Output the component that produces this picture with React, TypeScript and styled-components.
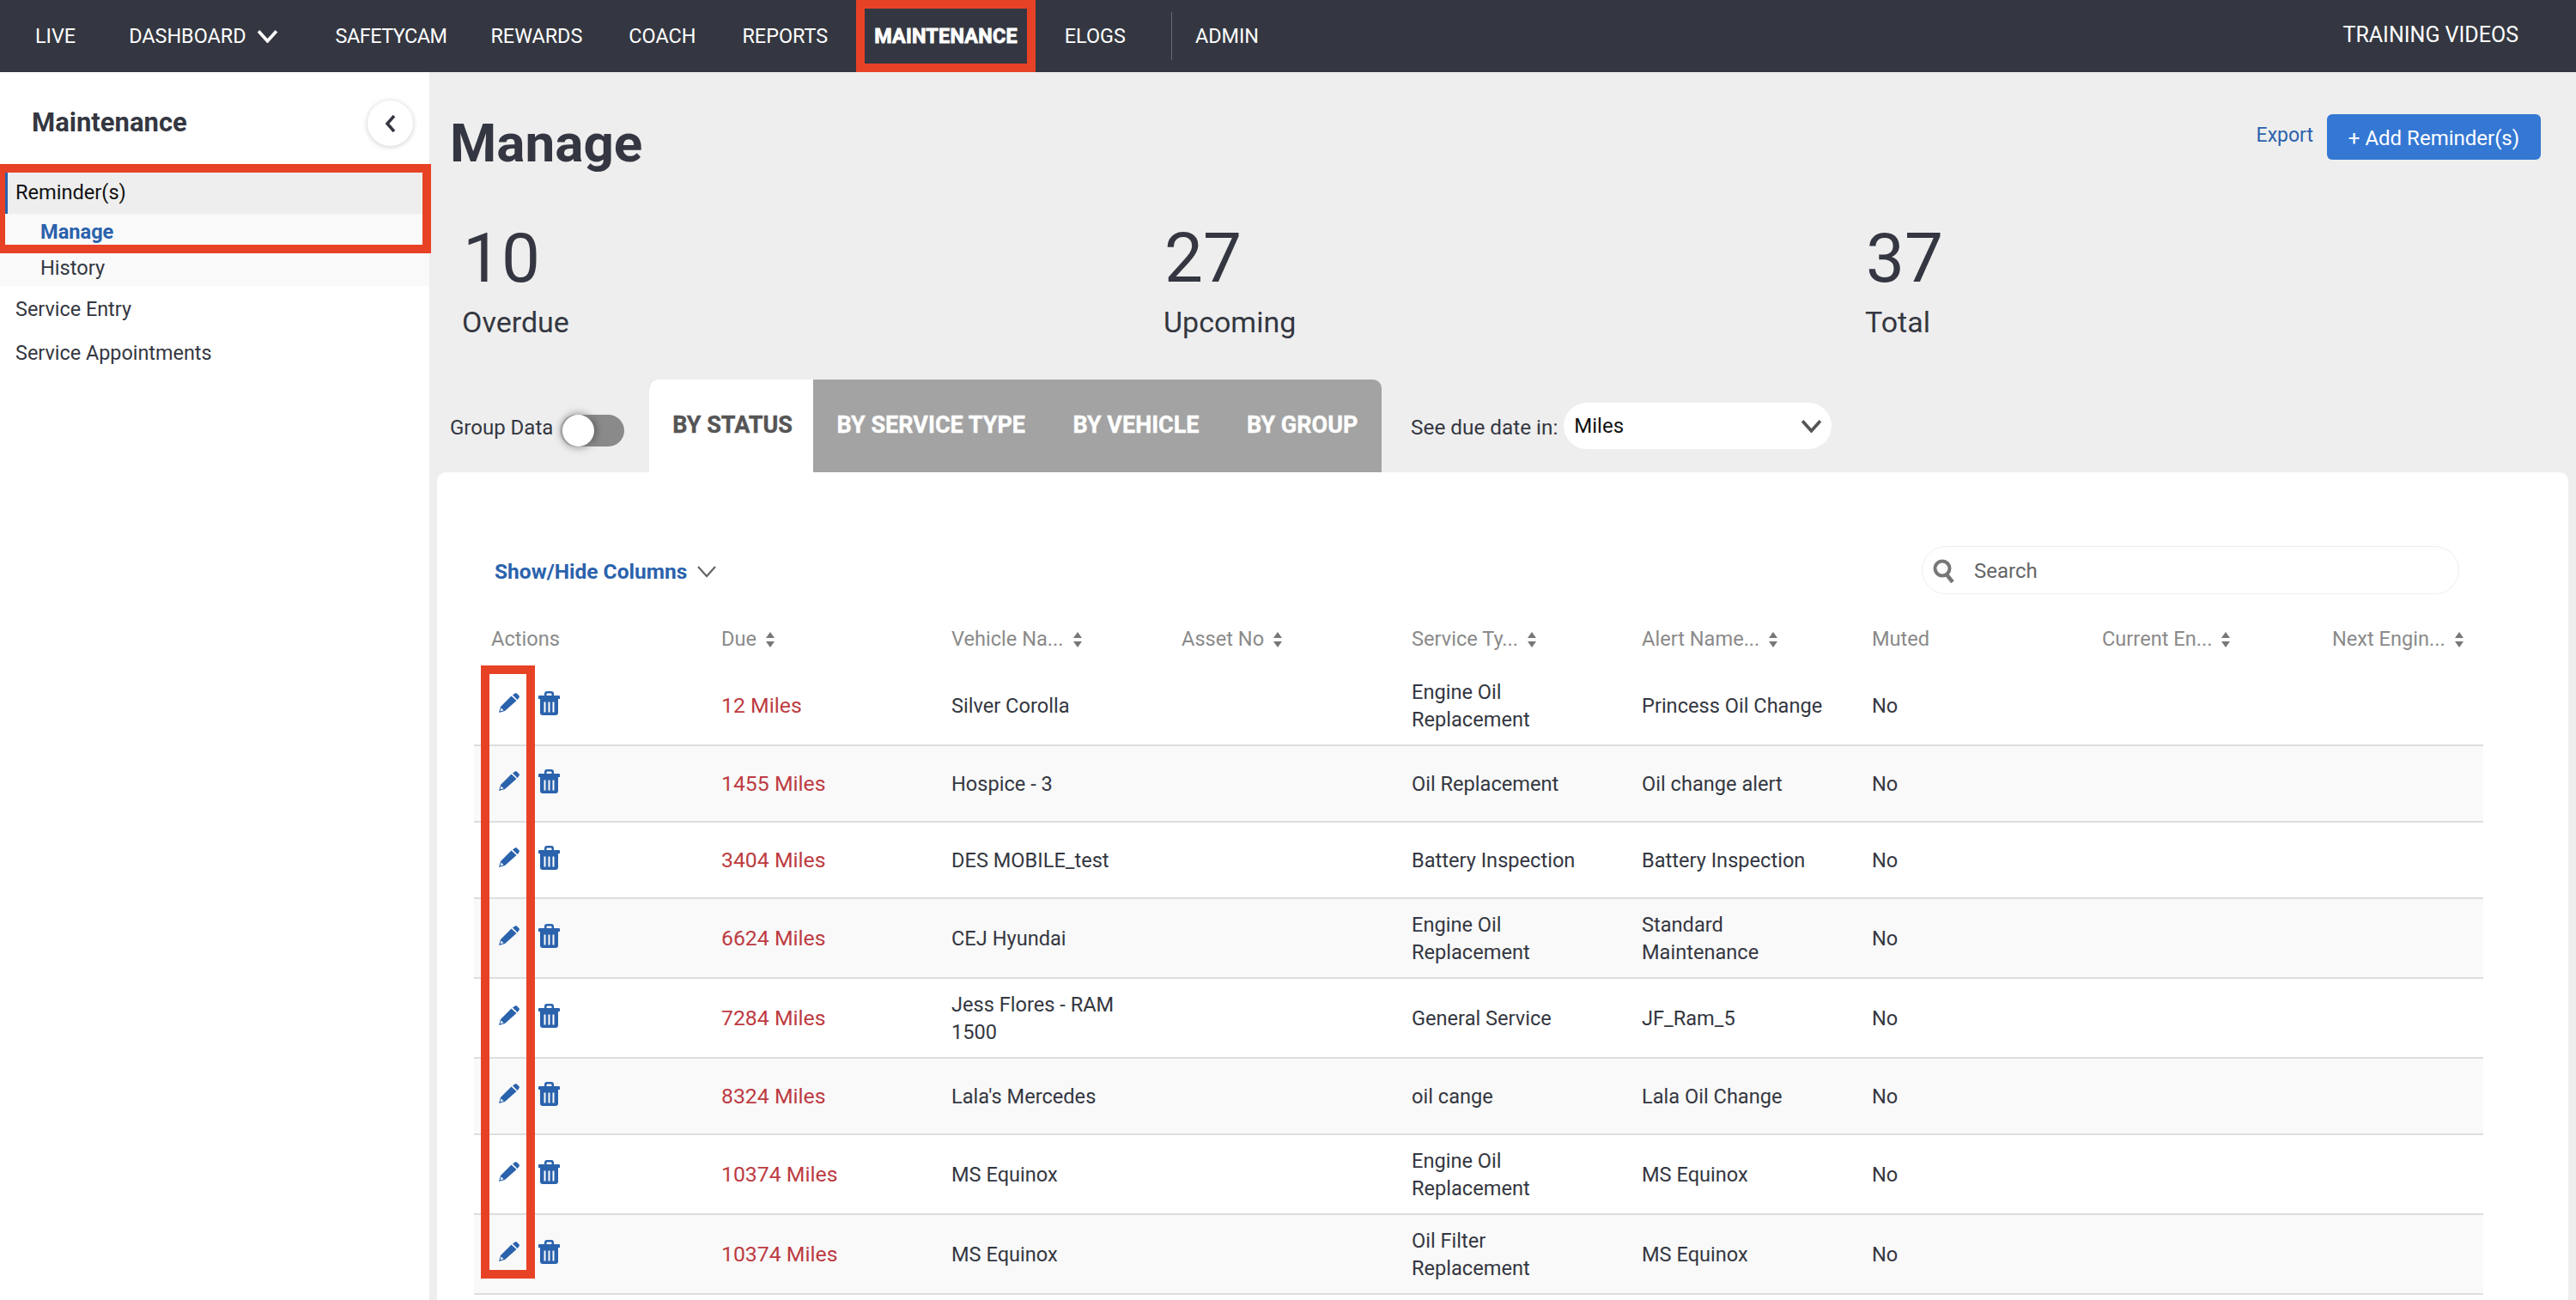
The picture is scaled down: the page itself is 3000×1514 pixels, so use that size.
import React from 'react'
import styled, { createGlobalStyle } from 'styled-components'

const GlobalStyle = createGlobalStyle`
  * { box-sizing: border-box; }
  html, body { margin: 0; padding: 0; background: #eeeeee; }
  body { font-family: Roboto, "Liberation Sans", sans-serif; color: #343741; }
`

const Page = styled.div`
  width: 3000px;
  height: 1514px;
  overflow: hidden;
  display: flex;
  flex-direction: column;
`

const TopBar = styled.nav`
  height: 84px;
  flex: none;
  background: #343741;
  display: flex;
  align-items: center;
  padding-left: 14px;
  padding-right: 67px;
  color: #fff;
  font-size: 23.4px;
`

const NavItem = styled.div`
  padding: 0 27px;
  white-space: nowrap;
`

const DashboardItem = styled(NavItem)`
  display: flex;
  align-items: center;
  gap: 12px;
  margin-left: 8px;
  margin-right: 13px;
`

const SafetyCamItem = styled(NavItem)`
  letter-spacing: -0.5px;
  margin-right: -3px;
`

const BoxedNavItem = styled.div`
  height: 84px;
  margin-left: 6px;
  margin-right: 7px;
  padding: 0 11px;
  border: 10px solid #e84226;
  display: flex;
  align-items: center;
  font-weight: 700;
  letter-spacing: 0.2px;
  -webkit-text-stroke: 0.8px #fff;
  white-space: nowrap;
`

const NavDivider = styled.div`
  width: 1px;
  height: 56px;
  margin-left: 26px;
  background: #666a73;
`

const RightLink = styled(NavItem)`
  margin-left: auto;
  padding: 0;
  margin-top: -4px;
  font-size: 25px;
`

const Body = styled.div`
  flex: 1;
  display: flex;
  min-height: 0;
`

const Sidebar = styled.aside`
  width: 500px;
  flex: none;
  background: #fff;
`

const SideHead = styled.div`
  height: 117px;
  display: flex;
  align-items: center;
  justify-content: space-between;
  padding: 0 19px 0 37px;
`

const SideTitle = styled.h2`
  margin: 0;
  font-size: 31px;
  font-weight: 700;
`

const CollapseButton = styled.button`
  width: 53px;
  height: 53px;
  border: 0;
  padding: 0;
  margin-top: 2px;
  border-radius: 50%;
  background: #fff;
  box-shadow: 0 1px 6px rgba(0, 0, 0, 0.2);
  display: flex;
  align-items: center;
  justify-content: center;
`

const MenuGroup = styled.div`
  position: relative;
`

const SideHighlight = styled.div`
  position: absolute;
  top: -10px;
  left: -4px;
  width: 506px;
  height: 104px;
  border: 10px solid #e84226;
`

const ParentRow = styled.div`
  height: 48px;
  background: #eeeeee;
  border-left: 9px solid #2a62ac;
  padding: 0 0 2px 9px;
  display: flex;
  align-items: center;
  font-size: 23.6px;
  color: #111;
`

const SubRow = styled.div<{ $active?: boolean }>`
  height: 42px;
  background: #f9f9f9;
  padding-left: 47px;
  display: flex;
  align-items: center;
  font-size: 23.6px;
  font-weight: ${({ $active }) => ($active ? 700 : 400)};
  color: ${({ $active }) => ($active ? '#2a62ac' : '#343741')};
`

const MenuRow = styled.div`
  height: 51px;
  padding: 2px 0 0 18px;
  display: flex;
  align-items: center;
  font-size: 23.4px;
`

const Main = styled.main`
  flex: 1;
  display: flex;
  flex-direction: column;
  padding: 48px 9px 0 24px;
  min-width: 0;
`

const HeaderRow = styled.div`
  display: flex;
  justify-content: space-between;
  align-items: flex-start;
  padding-right: 32px;
`

const PageTitle = styled.h1`
  margin: 0;
  font-size: 62px;
  line-height: 70px;
  font-weight: 700;
`

const HeaderActions = styled.div`
  display: flex;
  align-items: center;
  gap: 16px;
  padding-top: 1px;
`

const ExportLink = styled.a`
  color: #2a62ac;
  font-size: 23px;
  margin-top: -4px;
`

const AddButton = styled.button`
  width: 249px;
  height: 53px;
  border: 0;
  border-radius: 6px;
  background: #3578d4;
  color: #fff;
  font: inherit;
  font-size: 24px;
  padding-top: 3px;
`

const Stats = styled.div`
  display: grid;
  grid-template-columns: repeat(3, 817px);
  margin-top: 55px;
  padding-left: 14px;
`

const Stat = styled.div``

const StatValue = styled.div`
  font-size: 80px;
  line-height: 88px;
  padding-left: 1px;
`

const StatLabel = styled.div`
  font-size: 34px;
  line-height: 40px;
  margin-top: 10px;
`

const Controls = styled.div`
  display: flex;
  align-items: center;
  height: 108px;
  margin-top: 47px;
  font-size: 24px;
`

const GroupLabel = styled.span`
  margin-top: 4px;
`

const Toggle = styled.div`
  position: relative;
  width: 75px;
  height: 37px;
  margin: 10px 29px 0 8px;
  border-radius: 19px;
  background: linear-gradient(90deg, #d0d0d0, #8a8a8a 55%);
`

const ToggleKnob = styled.div`
  position: absolute;
  left: 3px;
  top: 0;
  width: 37px;
  height: 37px;
  border-radius: 50%;
  background: #fff;
  box-shadow: 0 0 8px 2px rgba(0, 0, 0, 0.35);
`

const Tabs = styled.div`
  display: flex;
  align-self: stretch;
  background: #a3a3a3;
  border-radius: 10px 10px 0 0;
  margin-right: 34px;
`

const Tab = styled.div<{ $active?: boolean }>`
  display: flex;
  align-items: center;
  padding: 0 ${({ $active }) => ($active ? '24px 2px 27px' : '27.7px 2px')};
  font-size: 27px;
  font-weight: 700;
  -webkit-text-stroke: 0.4px currentColor;
  white-space: nowrap;
  color: ${({ $active }) => ($active ? '#555' : '#fff')};
  background: ${({ $active }) => ($active ? '#fff' : 'transparent')};
  border-radius: ${({ $active }) => ($active ? '10px 0 0 0' : '0')};
`

const DueLabel = styled.span`
  margin-right: 7px;
  margin-top: 2px;
  font-size: 24.3px;
`

const DueSelect = styled.div`
  width: 312px;
  height: 54px;
  border-radius: 27px;
  background: #fff;
  display: flex;
  align-items: center;
  justify-content: space-between;
  padding: 0 11px 0 12px;
  color: #111;
`

const Card = styled.section`
  flex: 1;
  margin-left: -15px;
  background: #fff;
  border-radius: 10px 10px 0 0;
  padding: 87px 99px 0 43px;
`

const Toolbar = styled.div`
  height: 56px;
  display: flex;
  align-items: center;
  justify-content: space-between;
  padding: 0 28px 0 24px;
`

const ColumnsToggle = styled.div`
  display: flex;
  align-items: center;
  gap: 11px;
  color: #2a62ac;
  font-size: 24.5px;
  font-weight: 700;
`

const SearchBox = styled.div`
  width: 626px;
  height: 56px;
  margin-top: -2px;
  padding: 2px 0 0 12px;
  border: 1px solid #eeeeee;
  border-radius: 28px;
  display: flex;
  align-items: center;
  gap: 22px;
  color: #666;
  font-size: 24px;
`

const TableWrap = styled.div`
  position: relative;
`

const ActionsHighlight = styled.div`
  position: absolute;
  top: 82px;
  left: 8px;
  width: 63px;
  height: 714px;
  border: 10px solid #e84226;
  pointer-events: none;
`

const Table = styled.table`
  width: 2340px;
  table-layout: fixed;
  border-collapse: collapse;
  font-size: 23.6px;
`

const HeadCell = styled.th`
  height: 83px;
  padding: 37px 0 0 20px;
  text-align: left;
  vertical-align: top;
  font-weight: 400;
  color: #8a8a8a;
  white-space: nowrap;
`

const Row = styled.tr<{ $striped: boolean }>`
  background: ${({ $striped }) => ($striped ? '#f9f9f9' : '#fff')};
  border-bottom: 2px solid #dddddd;
`

const Cell = styled.td`
  height: 89px;
  padding: 13.5px 20px;
  line-height: 32px;
  color: #343741;
`

const DueCell = styled(Cell)`
  color: #bd3b42;
  font-size: 24.8px;
`

const RowActions = styled.div`
  display: flex;
  align-items: center;
  gap: 22px;
  padding-left: 9px;
  margin-top: -6px;
`

const SortArrows = () => (
  <svg width="12" height="18" viewBox="0 0 12 18" style={{ marginLeft: 10, verticalAlign: -2 }}>
    <path d="M6 0l5 7H1zM6 18l-5-7h10z" fill="#777" />
  </svg>
)

const Pencil = () => (
  <svg width="24" height="23" viewBox="0 0 24 23">
    <path
      fill="#2a62ac"
      fillRule="evenodd"
      d="M0 23l2-7L14.500 3.500l6 5.500L7 21zM2.600 17.400l-1 3.900 3.900-1zM16 2.500L18.700.6c.6-.6 1.500-.6 2.100 0l2.700 2.700c.6.6.6 1.500 0 2.100L21.600 8z"
    />
  </svg>
)

const Trash = () => (
  <svg width="25" height="28" viewBox="0 0 25 28">
    <path
      fill="#2a62ac"
      fillRule="evenodd"
      d="M7 5V3a3 3 0 0 1 3-3h5a3 3 0 0 1 3 3v2h6a1 1 0 0 1 1 1v3H0V6a1 1 0 0 1 1-1zm2.500 0h6V3.500a1 1 0 0 0-1-1h-4a1 1 0 0 0-1 1zM2 9h21v16a3 3 0 0 1-3 3H5a3 3 0 0 1-3-3zM6.500 12.500v12h2v-12zM11.500 12.500v12h2v-12zM16.500 12.500v12h2v-12z"
    />
  </svg>
)

const Chevron = ({ color, width, height, stroke }: { color: string; width: number; height: number; stroke: number }) => (
  <svg width={width} height={height} viewBox="0 0 24 15" preserveAspectRatio="none">
    <path d="M2 2l10 11L22 2" fill="none" stroke={color} strokeWidth={stroke} />
  </svg>
)

const columns = [
  { label: 'Actions', sort: false, width: 268 },
  { label: 'Due', sort: true, width: 268 },
  { label: 'Vehicle Na...', sort: true, width: 268 },
  { label: 'Asset No', sort: true, width: 268 },
  { label: 'Service Ty...', sort: true, width: 268 },
  { label: 'Alert Name...', sort: true, width: 268 },
  { label: 'Muted', sort: false, width: 268 },
  { label: 'Current En...', sort: true, width: 268 },
  { label: 'Next Engin...', sort: true, width: 196 },
]

const rows = [
  { due: '12 Miles', vehicle: 'Silver Corolla', service: 'Engine Oil Replacement', alert: 'Princess Oil Change' },
  { due: '1455 Miles', vehicle: 'Hospice - 3', service: 'Oil Replacement', alert: 'Oil change alert' },
  { due: '3404 Miles', vehicle: 'DES MOBILE_test', service: 'Battery Inspection', alert: 'Battery Inspection' },
  { due: '6624 Miles', vehicle: 'CEJ Hyundai', service: 'Engine Oil Replacement', alert: 'Standard Maintenance' },
  { due: '7284 Miles', vehicle: 'Jess Flores - RAM 1500', service: 'General Service', alert: 'JF_Ram_5' },
  { due: '8324 Miles', vehicle: "Lala's Mercedes", service: 'oil cange', alert: 'Lala Oil Change' },
  { due: '10374 Miles', vehicle: 'MS Equinox', service: 'Engine Oil Replacement', alert: 'MS Equinox' },
  { due: '10374 Miles', vehicle: 'MS Equinox', service: 'Oil Filter Replacement', alert: 'MS Equinox' },
]

const stats = [
  { value: '10', label: 'Overdue' },
  { value: '27', label: 'Upcoming' },
  { value: '37', label: 'Total' },
]

export default function App() {
  return (
    <Page>
      <GlobalStyle />
      <TopBar>
        <NavItem>LIVE</NavItem>
        <DashboardItem>
          DASHBOARD
          <Chevron color="#fff" width={25} height={16} stroke={3.5} />
        </DashboardItem>
        <SafetyCamItem>SAFETYCAM</SafetyCamItem>
        <NavItem>REWARDS</NavItem>
        <NavItem>COACH</NavItem>
        <NavItem>REPORTS</NavItem>
        <BoxedNavItem>MAINTENANCE</BoxedNavItem>
        <NavItem>ELOGS</NavItem>
        <NavDivider />
        <NavItem>ADMIN</NavItem>
        <RightLink>TRAINING VIDEOS</RightLink>
      </TopBar>
      <Body>
        <Sidebar>
          <SideHead>
            <SideTitle>Maintenance</SideTitle>
            <CollapseButton>
              <svg width="14" height="22" viewBox="0 0 14 22">
                <path d="M11 2L3 11l8 9" fill="none" stroke="#343741" strokeWidth="3.500" />
              </svg>
            </CollapseButton>
          </SideHead>
          <MenuGroup>
            <ParentRow>Reminder(s)</ParentRow>
            <SubRow $active>Manage</SubRow>
            <SubRow>History</SubRow>
            <SideHighlight />
          </MenuGroup>
          <MenuRow>Service Entry</MenuRow>
          <MenuRow>Service Appointments</MenuRow>
        </Sidebar>
        <Main>
          <HeaderRow>
            <PageTitle>Manage</PageTitle>
            <HeaderActions>
              <ExportLink>Export</ExportLink>
              <AddButton>+ Add Reminder(s)</AddButton>
            </HeaderActions>
          </HeaderRow>
          <Stats>
            {stats.map((stat) => (
              <Stat key={stat.label}>
                <StatValue>{stat.value}</StatValue>
                <StatLabel>{stat.label}</StatLabel>
              </Stat>
            ))}
          </Stats>
          <Controls>
            <GroupLabel>Group Data</GroupLabel>
            <Toggle>
              <ToggleKnob />
            </Toggle>
            <Tabs>
              <Tab $active>BY STATUS</Tab>
              <Tab>BY SERVICE TYPE</Tab>
              <Tab>BY VEHICLE</Tab>
              <Tab>BY GROUP</Tab>
            </Tabs>
            <DueLabel>See due date in:</DueLabel>
            <DueSelect>
              Miles
              <Chevron color="#555" width={25} height={16} stroke={3.5} />
            </DueSelect>
          </Controls>
          <Card>
            <Toolbar>
              <ColumnsToggle>
                Show/Hide Columns
                <Chevron color="#666" width={24} height={15} stroke={2.2} />
              </ColumnsToggle>
              <SearchBox>
                <svg width="26" height="28" viewBox="0 0 26 28">
                  <circle cx="11" cy="11" r="8.500" fill="none" stroke="#777" strokeWidth="4" />
                  <path d="M16 18l7 9" stroke="#777" strokeWidth="4.500" />
                </svg>
                Search
              </SearchBox>
            </Toolbar>
            <TableWrap>
              <Table>
                <colgroup>
                  {columns.map((col) => (
                    <col key={col.label} width={col.width} />
                  ))}
                </colgroup>
                <thead>
                  <tr>
                    {columns.map((col) => (
                      <HeadCell key={col.label}>
                        {col.label}
                        {col.sort && <SortArrows />}
                      </HeadCell>
                    ))}
                  </tr>
                </thead>
                <tbody>
                  {rows.map((row, index) => (
                    <Row key={index} $striped={index % 2 === 1}>
                      <Cell>
                        <RowActions>
                          <Pencil />
                          <Trash />
                        </RowActions>
                      </Cell>
                      <DueCell>{row.due}</DueCell>
                      <Cell>{row.vehicle}</Cell>
                      <Cell />
                      <Cell>{row.service}</Cell>
                      <Cell>{row.alert}</Cell>
                      <Cell>No</Cell>
                      <Cell />
                      <Cell />
                    </Row>
                  ))}
                </tbody>
              </Table>
              <ActionsHighlight />
            </TableWrap>
          </Card>
        </Main>
      </Body>
    </Page>
  )
}
